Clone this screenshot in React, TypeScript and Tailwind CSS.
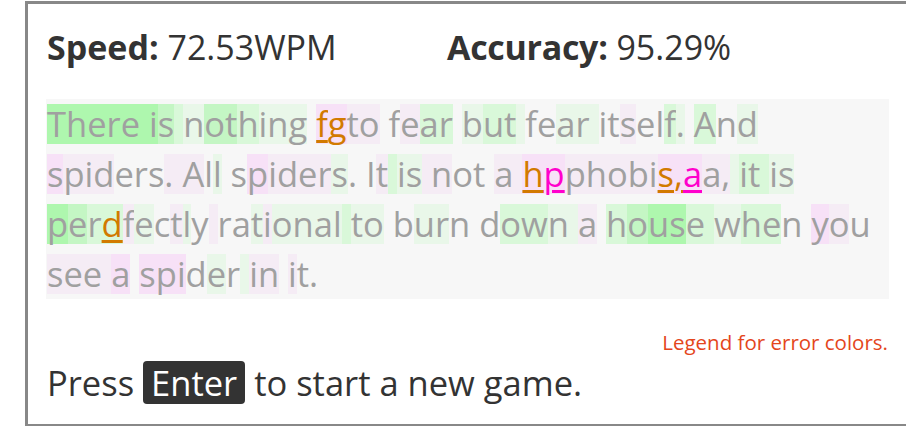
import React from "react";

const BG: Record<string, string> = {
  "1": "bg-[#aef7ae]",
  "2": "bg-[#c4f6c4]",
  "3": "bg-[#d9f8d9]",
  "4": "bg-[#e9f7e9]",
  P: "bg-[#f7e1f7]",
  p: "bg-[#f5ecf5]",
  ".": "",
};

type Line = { text: string; colors: string; errors: Record<number, "o" | "m"> };

const LINES: Line[] = [
  {
    text: "There is nothing fgto fear but fear itself. And",
    colors: "1111111234223444" + ".PPpp..p33.4334." + ".444..p..34.3.4",
    errors: { 17: "o", 18: "o" },
  },
  {
    text: "spiders. All spiders. It is not a hpphobis,aa, it is",
    colors: "Pppp...ppp.4..Pp" + "ppp4...p344pp..." + "ppPPpppppPPPpp433344",
    errors: { 34: "o", 35: "m", 41: "o", 42: "o", 43: "m" },
  },
  {
    text: "perdfectly rational to burn down a house when you",
    colors: "1233p4.p4.p..4p4" + "444344..44...334" + "4p.321133433..Pp.",
    errors: { 3: "o" },
  },
  {
    text: "see a spider in it.",
    colors: "ppppP.PPP.4.4pp.p..",
    errors: {},
  },
];

function PassageLine({ line }: { line: Line }) {
  return (
    <div className="flex h-[50px] items-start pt-[5px]">
      {line.text.split("").map((ch, i) => {
        const err = line.errors[i];
        const cls = [
          "h-[40px] leading-[40px] whitespace-pre",
          BG[line.colors[i]] ?? "",
          err === "o"
            ? "text-[#d27a00] underline decoration-[3px] underline-offset-[3px]"
            : err === "m"
            ? "text-[#f0c] underline decoration-[3px] underline-offset-[3px]"
            : "",
        ].join(" ");
        return (
          <span key={i} className={cls}>
            {ch}
          </span>
        );
      })}
    </div>
  );
}

export default function App() {
  return (
    <div className="h-[426px] w-[906px] overflow-hidden bg-white font-['Open_Sans',sans-serif]">
      <div className="ml-[25px] mt-[1px] h-[426px] w-[1000px] border-[3px] border-[#888] pl-[18px] pt-[18px]">
        <div className="flex h-[50px] pl-[1px] text-[34px] leading-[50px] text-[#333]">
          <div className="w-[400px]">
            <span className="font-bold">Speed:</span> 72.53WPM
          </div>
          <div>
            <span className="font-bold tracking-[-0.3px]">Accuracy:</span> 95.29%
          </div>
        </div>
        <div className="mt-[27px] w-[843px] bg-[#f7f7f7] pl-[1px] text-[34.5px] text-[#a0a0a0]">
          {LINES.map((l, i) => (
            <PassageLine key={i} line={l} />
          ))}
        </div>
        <div className="mt-[28px] w-[843px] pr-[1px] text-right text-[20.5px] leading-[30px] text-[#e4461c]">
          Legend for error colors.
        </div>
        <div className="mt-[1px] pl-[1px] text-[34.5px] leading-[50px] text-[#333]">
          Press{" "}
          <kbd className="inline-block rounded-[4px] bg-[#333] px-[8px] font-['Open_Sans',sans-serif] leading-[43px] text-white">
            Enter
          </kbd>{" "}
          to start a new game.
        </div>
      </div>
    </div>
  );
}
